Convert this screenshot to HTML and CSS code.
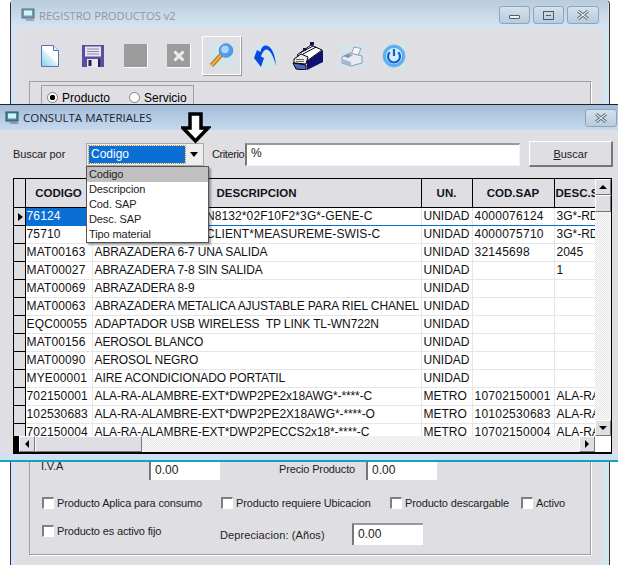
FILE: index.html
```html
<!DOCTYPE html>
<html lang="en">
<head>
    <meta charset="UTF-8">
    <meta name="viewport" content="width=device-width, initial-scale=1.0">
    <title>Registro Productos</title>
    <link rel="stylesheet" href="styles.css">
</head>
<body>
    <!-- ventana de atras -->
    <div class="window back">
        <div class="titlebar">
            <svg class="appicon" viewBox="0 0 16 16"><rect x="2" y="2" width="12" height="9" fill="#6f9fb8" stroke="#5a6a78"/><rect x="4" y="3.500" width="8" height="5" fill="#d4f2f8"/><path d="M5 12h8l2 2H7z" fill="#9aa8b2"/></svg>
            <span class="title-text">REGISTRO PRODUCTOS v2</span>
            <div class="caption-btns">
                <div class="cap-btn min"><span class="cap-min"></span></div>
                <div class="cap-btn max"><span class="cap-max"></span></div>
                <div class="cap-btn close"><svg viewBox="0 0 14 10" width="14" height="10"><path d="M2 1l10 8M12 1L2 9" stroke="#5a6672" stroke-width="3"/><path d="M2 1l10 8M12 1L2 9" stroke="#e8eef4" stroke-width="1.200"/></svg></div>
            </div>
        </div>
        <div class="client">
            <div class="toolbar">
                <div class="tool t-new">
                    <svg viewBox="0 0 24 24" width="24" height="24"><defs><linearGradient id="g1" x1="0" y1="1" x2="0.800" y2="0"><stop offset="0" stop-color="#7fd0e6"/><stop offset=".5" stop-color="#d8f2f8"/><stop offset=".6" stop-color="#fff"/></linearGradient></defs><path d="M3.500 1.500h12l5 5v16h-17z" fill="url(#g1)" stroke="#5c74b0"/><path d="M15.500 1.500v5h5" fill="#e8eef8" stroke="#5c74b0"/></svg>
                </div>
                <div class="tool t-save">
                    <svg viewBox="0 0 22 22" width="22" height="22"><rect x="0" y="0" width="22" height="22" fill="#5a4f9f"/><rect x="3" y="1.500" width="16" height="10" fill="#e8e6f2"/><path d="M5 4h12M5 6.500h12M5 9h12" stroke="#8a86a8"/><rect x="5" y="14" width="12" height="8" fill="#e8e8ee"/><rect x="6.500" y="15" width="3" height="6" fill="#20205a"/><rect x="16" y="14" width="2" height="8" fill="#20205a"/></svg>
                </div>
                <div class="tool t-off"></div>
                <div class="tool t-off t-x">
                    <svg viewBox="0 0 12 12" width="12" height="12"><path d="M1.500 1.500l9 9M10.500 1.500l-9 9" stroke="#eee" stroke-width="3"/></svg>
                </div>
                <div class="tool t-find">
                    <div class="tool-bg">
                        <svg viewBox="0 0 24 24" width="24" height="24"><path d="M1.500 22.500L12 11" stroke="#b87414" stroke-width="4.500"/><path d="M1.500 22.500L12 11" stroke="#f2b33c" stroke-width="2"/><circle cx="16" cy="7.500" r="6.800" fill="#4d9df0" stroke="#5a8fd0"/><circle cx="15" cy="6.500" r="3.800" fill="#a9d6fb"/></svg>
                    </div>
                </div>
                <div class="tool t-undo">
                    <svg viewBox="0 0 24 24" width="24" height="24"><rect width="24" height="24" fill="#d3e4ea"/><path d="M23 22C22.500 12 19 2 13 1.500 10 1.500 8 4 7.500 8L4 6 1 14 8 23 11 14 8 12.500C9.500 8 11.500 5 14 5.500 18 6.500 21 14 23 22z" fill="#0b49e0"/></svg>
                </div>
                <div class="tool t-card">
                    <svg viewBox="0 0 32 28" width="32" height="28"><rect x="18" y="0" width="4" height="3" fill="#10106e"/><path d="M31 8V20L15 28V19z" fill="#10106e"/><path d="M5 13L19 3l11 5-15 11z" fill="#fff" stroke="#000"/><path d="M8 11L21 4M11 12L24 5" stroke="#000"/><rect x="11" y="6" width="3" height="3" fill="#10106e"/><path d="M2 17L9 12l7 3-2 7-12-1z" fill="#eee" stroke="#000"/><path d="M4 17.500h8M4 19.500h8" stroke="#666"/><path d="M1 21l13 2v5L4 27z" fill="#4f68c4" stroke="#000"/></svg>
                </div>
                <div class="tool t-print">
                    <svg viewBox="0 0 24 24" width="24" height="24"><rect width="24" height="24" fill="#d3e4ea"/><path d="M11 11L14 3l7 1.500-3 7z" fill="#f4f8fa" stroke="#8fa0b0"/><path d="M2 13l8-4 12 3v7l-11 3-9-3z" fill="#e6ecf2" stroke="#8a9ab0"/><path d="M2 15l9 3v4l-9-3z" fill="#a8b8d0"/><path d="M3 12l5-2 5 1-5 3z" fill="#8096b8"/></svg>
                </div>
                <div class="tool t-power">
                    <svg viewBox="0 0 24 24" width="24" height="24"><rect width="24" height="24" fill="#d3e4ea"/><circle cx="12" cy="12" r="11" fill="#59aef5" stroke="#7eb4e0"/><circle cx="12" cy="12" r="8" fill="#d4ecfb"/><path d="M7.800 8.200a6 6 0 1 0 8.400 0" fill="none" stroke="#0d62c8" stroke-width="2.200"/><path d="M12 5v7" stroke="#0d62c8" stroke-width="2.200"/></svg>
                </div>
            </div>
            <div class="group">
                <div class="radio-box">
                    <label class="radio on">Producto</label>
                    <label class="radio">Servicio</label>
                </div>
                <!-- lo de en medio queda tapado por la consulta -->
                <div class="hidden-part"></div>
                <div class="form-row row-iva">
                    <span class="f-label l-iva">I.V.A</span>
                    <div class="field f-iva">0.00</div>
                    <span class="f-label l-precio">Precio Producto</span>
                    <div class="field f-precio">0.00</div>
                </div>
                <div class="form-row row-checks">
                    <label class="check c1">Producto Aplica para consumo</label>
                    <label class="check c2">Producto requiere Ubicacion</label>
                    <label class="check c3">Producto descargable</label>
                    <label class="check">Activo</label>
                </div>
                <div class="form-row row-last">
                    <label class="check c-fijo">Producto es activo fijo</label>
                    <span class="f-label l-dep">Depreciacion: (Años)</span>
                    <div class="field f-dep">0.00</div>
                </div>
            </div>
        </div>
    </div>

    <!-- ventana consulta -->
    <div class="window dialog">
        <div class="titlebar">
            <svg class="appicon" viewBox="0 0 16 16"><rect x="2" y="2" width="12" height="9" fill="#3f8faa" stroke="#3a4a58"/><rect x="4" y="3.500" width="8" height="5" fill="#d4f2f8"/><path d="M5 12h8l2 2H7z" fill="#8a98a2"/></svg>
            <span class="title-text">CONSULTA MATERIALES</span>
            <div class="cap-btn close"><svg viewBox="0 0 14 10" width="14" height="10"><path d="M2 1l10 8M12 1L2 9" stroke="#5a6672" stroke-width="3"/><path d="M2 1l10 8M12 1L2 9" stroke="#dde5ee" stroke-width="1.200"/></svg></div>
        </div>
        <div class="client">
            <div class="search">
                <span class="lbl-buscar">Buscar por</span>
                <div class="combo">
                    <div class="combo-val"><span>Codigo</span></div>
                    <div class="combo-arrow"></div>
                </div>
                <span class="lbl-criterio">Criterio</span>
                <div class="criterio">%</div>
                <div class="btn-buscar"><u>B</u>uscar</div>
            </div>
            <div class="grid">
                <div class="grid-main">
                    <table class="data">
                        <colgroup><col class="c-ind"><col class="c-cod"><col class="c-desc"><col class="c-un"><col class="c-sap"><col class="c-dsap"></colgroup>
                        <thead>
                            <tr><th></th><th>CODIGO</th><th>DESCRIPCION</th><th>UN.</th><th>COD.SAP</th><th class="th-cut">DESC.SAP</th></tr>
                        </thead>
                        <tbody>
                            <tr class="current"><td class="ind"><span class="pointer"></span></td><td class="sel">76124</td><td class="wide">ANT-RF-ROUTER*TN8132*02F10F2*3G*-GENE-C</td><td>UNIDAD</td><td>4000076124</td><td>3G*-RDU</td></tr>
                            <tr><td class="ind"></td><td>75710</td><td class="wide">ANT-RF-ROUTER-XCLIENT*MEASUREME-SWIS-C</td><td>UNIDAD</td><td>4000075710</td><td>3G*-RDU</td></tr>
                            <tr><td class="ind"></td><td>MAT00163</td><td>ABRAZADERA 6-7 UNA SALIDA</td><td>UNIDAD</td><td>32145698</td><td>2045</td></tr>
                            <tr><td class="ind"></td><td>MAT00027</td><td>ABRAZADERA 7-8 SIN SALIDA</td><td>UNIDAD</td><td></td><td>1</td></tr>
                            <tr><td class="ind"></td><td>MAT00069</td><td>ABRAZADERA 8-9</td><td>UNIDAD</td><td></td><td></td></tr>
                            <tr><td class="ind"></td><td>MAT00063</td><td>ABRAZADERA METALICA AJUSTABLE PARA RIEL CHANEL</td><td>UNIDAD</td><td></td><td></td></tr>
                            <tr><td class="ind"></td><td>EQC00055</td><td>ADAPTADOR USB WIRELESS&nbsp; TP LINK TL-WN722N</td><td>UNIDAD</td><td></td><td></td></tr>
                            <tr><td class="ind"></td><td>MAT00156</td><td>AEROSOL BLANCO</td><td>UNIDAD</td><td></td><td></td></tr>
                            <tr><td class="ind"></td><td>MAT00090</td><td>AEROSOL NEGRO</td><td>UNIDAD</td><td></td><td></td></tr>
                            <tr><td class="ind"></td><td>MYE00001</td><td>AIRE ACONDICIONADO PORTATIL</td><td>UNIDAD</td><td></td><td></td></tr>
                            <tr><td class="ind"></td><td>702150001</td><td>ALA-RA-ALAMBRE-EXT*DWP2PE2x18AWG*-****-C</td><td>METRO</td><td>10702150001</td><td>ALA-RA-</td></tr>
                            <tr><td class="ind"></td><td>102530683</td><td>ALA-RA-ALAMBRE-EXT*DWP2PE2X18AWG*-****-O</td><td>METRO</td><td>10102530683</td><td>ALA-RA-</td></tr>
                            <tr><td class="ind"></td><td>702150004</td><td>ALA-RA-ALAMBRE-EXT*DWP2PECCS2x18*-****-C</td><td>METRO</td><td>10702150004</td><td>ALA-RA-</td></tr>
                        </tbody>
                    </table>
                </div>
                <div class="vbar">
                    <div class="sb-btn"><span class="tri up"></span></div>
                    <div class="sb-thumb-v"></div>
                    <div class="sb-track"></div>
                    <div class="sb-btn"><span class="tri down"></span></div>
                </div>
                <div class="hbar">
                    <div class="hbar-black"></div>
                    <div class="sb-btn"><span class="tri left"></span></div>
                    <div class="sb-thumb-h"></div>
                    <div class="sb-track"></div>
                    <div class="sb-btn"><span class="tri right"></span></div>
                </div>
                <div class="corner"></div>
            </div>
        </div>
    </div>

    <!-- lista abierta del combo -->
    <ul class="dropdown">
        <li class="active">Codigo</li>
        <li>Descripcion</li>
        <li>Cod. SAP</li>
        <li>Desc. SAP</li>
        <li>Tipo material</li>
    </ul>

    <!-- flecha de anotacion -->
    <svg class="big-arrow" viewBox="0 0 30 32" width="30" height="32"><path d="M9 2h11v14h7L14.500 29 2 16h7z" fill="#fff" stroke="#000" stroke-width="3.500"/></svg>
</body>
</html>
```

FILE: styles.css
```css
html, body {
    margin: 0;
    padding: 0;
    background: #fff;
}
body {
    width: 618px;
    height: 565px;
    overflow: hidden;
    position: relative;
    font-family: "Liberation Sans", Arial, sans-serif;
    font-size: 12px;
    color: #000;
}
.window {
    position: absolute;
    box-sizing: border-box;
    display: flex;
    flex-direction: column;
}
.back {
    left: 10px;
    top: -1px;
    width: 600px;
    height: 572px;
    border: 1px solid #333;
    border-radius: 5px 5px 0 0;
    background: #d6e4f2;
    padding: 0 7px 5px 6px;
}
.dialog {
    left: 0;
    top: 104px;
    width: 618px;
    height: 358px;
    border-top: 1px solid #222;
    border-bottom: 2px solid #14a0c0;
    background: #cfe0f1;
    padding: 0 0 7px 1px;
}
.titlebar {
    display: flex;
    align-items: center;
    flex: none;
}
.back .titlebar {
    height: 28px;
    margin: 0 -6px 0 -6px;
    padding: 2px 9px 0 9px;
    box-sizing: border-box;
    background: linear-gradient(#b9ccdd, #d6e4f2);
}
.dialog .titlebar {
    height: 25px;
    margin-left: -1px;
    padding: 0 1px 0 4px;
    background: linear-gradient(#a3bcd8, #c6daee);
}
.appicon {
    width: 16px;
    height: 16px;
    flex: none;
}
.title-text {
    font-family: "Open Sans", sans-serif;
    font-size: 11.200px;
    margin-left: 3px;
}
.back .title-text {
    color: #8d98a4;
}
.dialog .title-text {
    color: #1a2430;
    font-size: 11.500px;
}
.caption-btns {
    margin-left: auto;
    display: flex;
    gap: 3px;
}
.cap-btn {
    box-sizing: border-box;
    height: 18px;
    border: 1px solid #8fa5bb;
    border-radius: 3px;
    background: linear-gradient(#d5e1ec, #b9cbde);
    display: flex;
    align-items: center;
    justify-content: center;
}
.cap-btn.min { width: 31px; }
.cap-btn.max { width: 31px; }
.back .cap-btn.close { width: 32px; }
.dialog .cap-btn.close {
    width: 32px;
    margin-left: auto;
}
.cap-min {
    box-sizing: border-box;
    width: 11px;
    height: 4px;
    background: #eef3f8;
    border: 1px solid #4e5a66;
    border-radius: 1px;
    margin-top: 3px;
}
.cap-max {
    box-sizing: border-box;
    width: 11px;
    height: 9px;
    border: 1px solid #4e5a66;
    background: linear-gradient(#4e5a66 0 3px, transparent 3px);
    background-size: 5px 1px;
    background-position: center;
    background-repeat: no-repeat;
}
.client {
    background: #dfdfe3;
    flex: 1;
    min-height: 0;
    display: flex;
    flex-direction: column;
}
.toolbar {
    display: flex;
    align-items: center;
    height: 50px;
    flex: none;
    padding: 3px 0 0 21px;
}
.tool {
    flex: none;
    display: flex;
    align-items: center;
    justify-content: center;
    width: 24px;
    height: 24px;
}
.t-new { margin-right: 19px; }
.t-save { margin-right: 19px; }
.t-off {
    background: #9c9c9c;
    border-right: 1px solid #fff;
    border-bottom: 1px solid #fff;
    margin-right: 19px;
    box-sizing: border-box;
}
.t-x { margin-right: 11px; }
.t-find {
    box-sizing: border-box;
    width: 39px;
    height: 39px;
    border: 1px solid #fff;
    box-shadow: 1px 1px 0 #9a9a9a;
    margin-right: 12px;
    position: relative;
    top: -1px;
}
.tool-bg {
    background: #d3e4ea;
    width: 24px;
    height: 24px;
}
.t-undo { margin-right: 15px; }
.t-card { width: 32px; height: 28px; margin-right: 16px; }
.t-print { margin-right: 18px; }
.group {
    box-sizing: border-box;
    margin: 0 10px 0 12px;
    height: 475px;
    flex: none;
    border: 1px solid #a0a0a0;
    border-right-color: #fff;
    border-bottom-color: #fff;
    box-shadow: inset -1px -1px 0 #a0a0a0;
    padding: 3px 0 0 11px;
    display: flex;
    flex-direction: column;
}
.radio-box {
    box-sizing: border-box;
    width: 153px;
    height: 28px;
    flex: none;
    border: 1px solid #a0a0a0;
    display: flex;
    align-items: center;
    padding: 0 0 3px 5px;
    gap: 19px;
}
.radio {
    display: flex;
    align-items: center;
    font-size: 12px;
}
.radio::before {
    content: "";
    box-sizing: border-box;
    width: 11px;
    height: 11px;
    border-radius: 50%;
    border: 1px solid #808080;
    background: #fff;
    margin-right: 4px;
}
.radio.on::before {
    background: radial-gradient(circle, #000 0 2.500px, #fff 3px);
}
.hidden-part {
    height: 346px;
    flex: none;
}
.form-row {
    display: flex;
    align-items: center;
    flex: none;
    font-size: 11px;
    letter-spacing: -0.15px;
    color: #222;
}
.row-iva { height: 20px; }
.l-iva { width: 108px; position: relative; top: -3px; }
.l-precio { width: 87px; margin-left: 59px; white-space: nowrap; }
.field {
    box-sizing: border-box;
    width: 71px;
    height: 21px;
    padding: 2px 0 0 4px;
    background: #fff;
    border-left: 2px solid #777;
    border-top: 2px solid #999;
    font-size: 12px;
    letter-spacing: 0;
}
.row-checks {
    margin-top: 16px;
    height: 16px;
}
.check {
    display: flex;
    align-items: center;
    white-space: nowrap;
}
.check::before {
    content: "";
    box-sizing: border-box;
    flex: none;
    width: 12px;
    height: 12px;
    border: 1px solid #fff;
    border-left: 2px solid #808080;
    border-top: 2px solid #808080;
    background: #fff;
    margin-right: 3px;
}
.row-checks .check::before, .c-fijo::before {
    margin-left: 1px;
}
.c1 { width: 179px; }
.c2 { width: 169px; }
.c3 { width: 131px; }
.row-last {
    margin-top: 12px;
    height: 22px;
}
.c-fijo { width: 179px; position: relative; top: -3px; }
.l-dep {
    width: 132px;
    white-space: nowrap;
    position: relative;
    top: 1px;
    letter-spacing: 0.1px;
}
.f-dep { height: 22px; }

/* consulta */
.search {
    display: flex;
    align-items: center;
    height: 48px;
    flex: none;
    font-size: 11px;
    color: #222;
    padding-left: 12px;
}
.lbl-buscar { width: 73px; letter-spacing: -0.1px; }
.combo {
    box-sizing: border-box;
    width: 118px;
    height: 23px;
    display: flex;
    background: #ededed;
    border: 1px solid #a8a8a8;
    padding: 2px;
}
.combo-val {
    width: 96px;
    background: #0a6fd4;
    color: #fff;
    outline: 1px dotted #d08a30;
    display: flex;
    align-items: center;
    padding-left: 2px;
    box-sizing: border-box;
    font-size: 12px;
}
.combo-arrow {
    flex: 1;
    margin-left: 2px;
    background: #efefef;
    position: relative;
}
.combo-arrow::after {
    content: "";
    position: absolute;
    left: 3px;
    top: 6px;
    border: 4px solid transparent;
    border-top: 5px solid #000;
}
.lbl-criterio {
    margin-left: 8px;
    width: 33px;
    letter-spacing: -0.4px;
    white-space: nowrap;
}
.criterio {
    box-sizing: border-box;
    width: 275px;
    height: 23px;
    background: #fff;
    border-left: 2px solid #777;
    border-top: 2px solid #999;
    border-right: 1px solid #f4f4f4;
    border-bottom: 1px solid #f4f4f4;
    padding: 1px 0 0 4px;
    font-size: 12px;
}
.btn-buscar {
    box-sizing: border-box;
    width: 84px;
    height: 26px;
    margin-left: 9px;
    background: #dfdfe3;
    border: 1px solid #fff;
    border-right: 2px solid #777;
    border-bottom: 2px solid #777;
    display: flex;
    align-items: center;
    justify-content: center;
    white-space: pre;
}
.grid {
    box-sizing: border-box;
    margin-left: 12px;
    width: 599px;
    height: 276px;
    flex: none;
    border: 1px solid #000;
    border-width: 1px 2px 2px 1px;
    display: grid;
    grid-template-columns: 581px 16px;
    grid-template-rows: 257px 16px;
    background: #fff;
}
.grid-main {
    overflow: hidden;
}
.data {
    border-collapse: collapse;
    table-layout: fixed;
    width: 581px;
    font-size: 12px;
}
.c-ind { width: 11px; }
.c-cod { width: 67px; }
.c-desc { width: 329px; }
.c-un { width: 51px; }
.c-sap { width: 82px; }
.c-dsap { width: 41px; }
.data th {
    height: 28px;
    padding: 0;
    background: #dfdfe3;
    border-right: 1px solid #000;
    border-bottom: 1px solid #000;
    font-size: 11.500px;
    font-weight: bold;
    color: #10141c;
    white-space: nowrap;
    overflow: hidden;
}
.data th.th-cut {
    text-align: left;
    padding-left: 1px;
    border-right: none;
}
.data td {
    height: 17px;
    padding: 0 0 0 2px;
    line-height: 17px;
    border-right: 1px solid #e6e6e6;
    border-bottom: 1px solid #e6e6e6;
    white-space: nowrap;
    overflow: hidden;
    color: #111;
}
.data td:nth-child(2) {
    padding-left: 1px;
    letter-spacing: 0.15px;
}
.data td:nth-child(3) {
    letter-spacing: -0.1px;
}
.data td.wide {
    letter-spacing: 0.1px;
}
.data td:nth-child(5) {
    letter-spacing: 0.25px;
}
.data td:last-child { border-right: none; }
.data td.ind {
    background: #dfdfe3;
    border-right: 1px solid #000;
    border-bottom: 1px solid #000;
    padding: 0;
}
.pointer {
    display: block;
    margin-left: 4px;
    width: 0;
    border: 4px solid transparent;
    border-left: 5px solid #000;
    border-right: none;
}
.data td.sel {
    background: #0a6fd4;
    color: #fff;
}
.current td {
    border-bottom-color: #0a6fd4;
}
.vbar {
    display: flex;
    flex-direction: column;
    background: #eee;
}
.sb-btn {
    box-sizing: border-box;
    flex: none;
    width: 16px;
    height: 16px;
    background: #dfdfe3;
    border: 1px solid #fff;
    border-right-color: #777;
    border-bottom-color: #777;
    display: flex;
    align-items: center;
    justify-content: center;
}
.sb-thumb-v {
    box-sizing: border-box;
    height: 17px;
    flex: none;
    background: #dfdfe3;
    border: 1px solid #fff;
    border-right-color: #777;
    border-bottom-color: #777;
}
.sb-thumb-h {
    box-sizing: border-box;
    width: 107px;
    flex: none;
    background: #dfdfe3;
    border: 1px solid #fff;
    border-right-color: #777;
    border-bottom-color: #777;
}
.sb-track {
    flex: 1;
    background: repeating-conic-gradient(#e6e6e6 0 25%, #fbfbfb 0 50%) 0 0 / 2px 2px;
}
.hbar {
    display: flex;
}
.hbar-black {
    width: 5px;
    background: #000;
    flex: none;
}
.corner { background: #fff; }
.tri {
    width: 0;
    height: 0;
    border: 4px solid transparent;
}
.tri.up { border-top: none; border-bottom-color: #000; }
.tri.down { border-bottom: none; border-top-color: #000; }
.tri.left { border-left: none; border-right-color: #000; }
.tri.right { border-right: none; border-left-color: #000; }

/* lista abierta */
.dropdown {
    position: absolute;
    left: 86px;
    top: 166px;
    width: 123px;
    height: 77px;
    box-sizing: border-box;
    margin: 0;
    padding: 0;
    list-style: none;
    background: #fff;
    border: 1px solid #555;
    box-shadow: 2px 2px 2px rgba(0, 0, 0, 0.35);
    font-size: 11px;
    letter-spacing: -0.1px;
    color: #222;
}
.dropdown li {
    height: 15px;
    line-height: 15px;
    padding-left: 2px;
}
.dropdown li.active {
    background: #c0c0c0;
}
.big-arrow {
    position: absolute;
    left: 181px;
    top: 112px;
}
```
